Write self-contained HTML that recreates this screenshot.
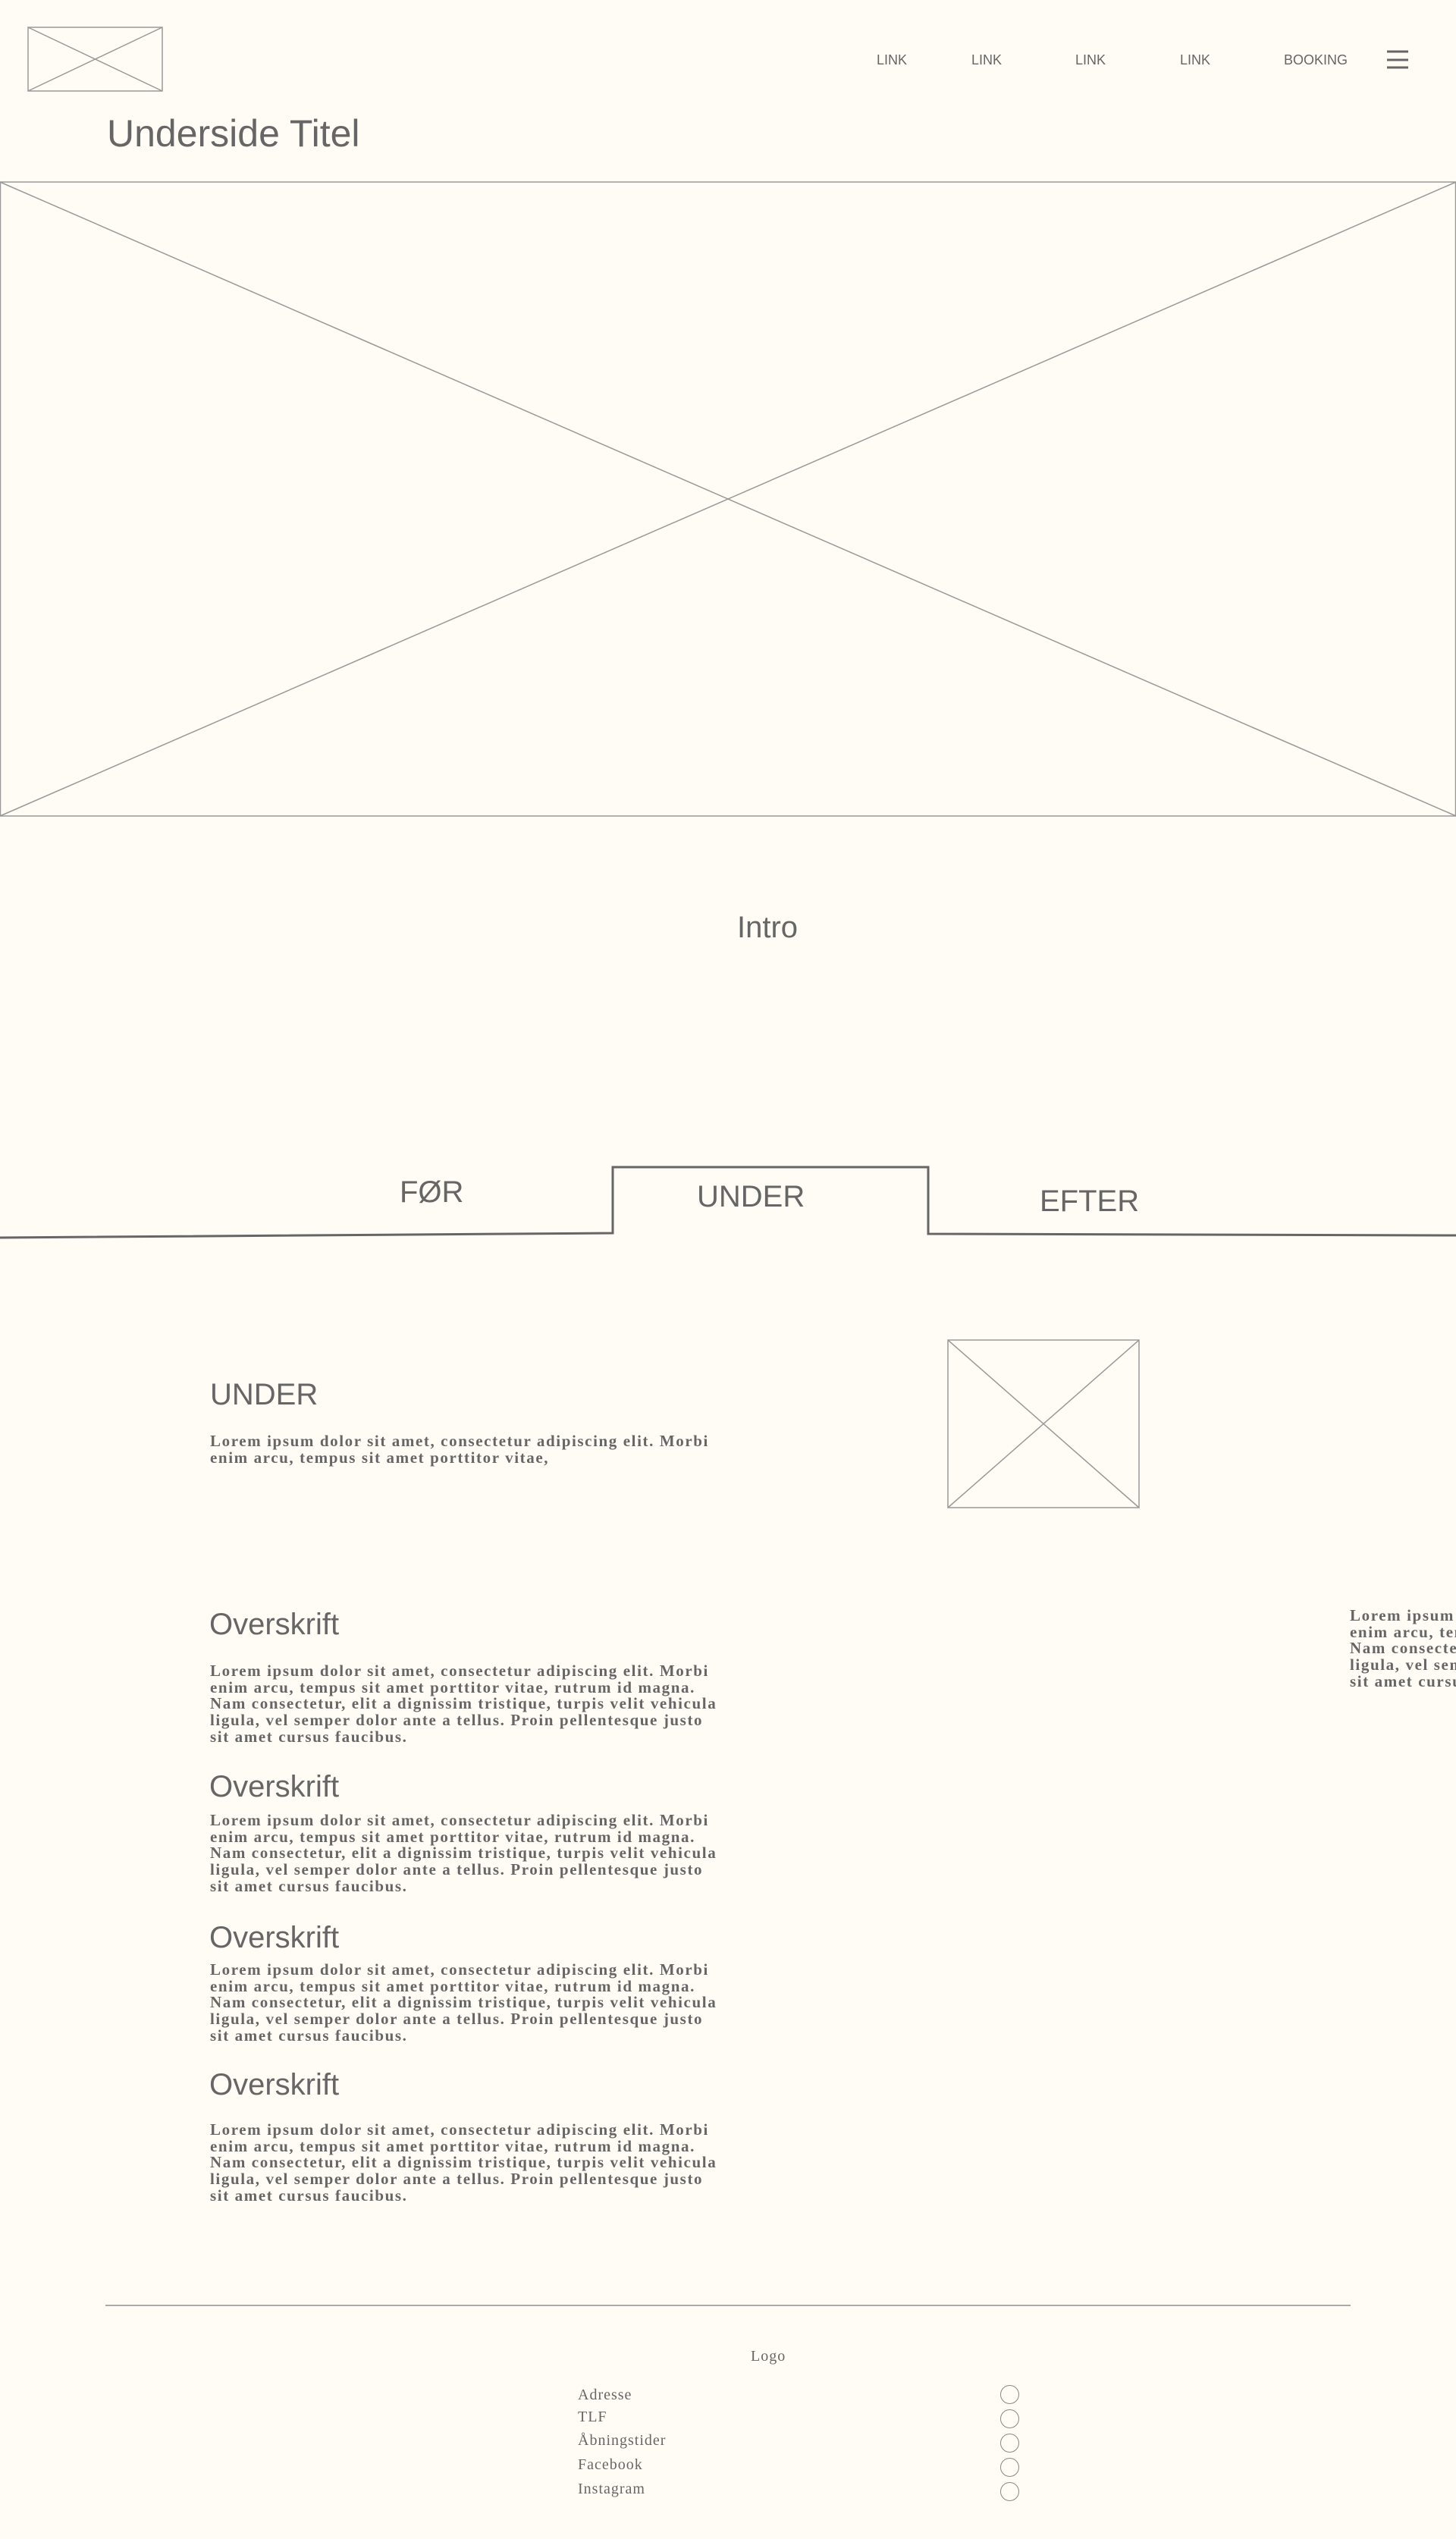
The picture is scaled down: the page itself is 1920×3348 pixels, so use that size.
<!DOCTYPE html>
<html><head><meta charset="utf-8"><style>
html,body{margin:0;padding:0;overflow:hidden}
body{width:1920px;height:3348px;background:#fffcf5;position:relative;overflow:hidden;color:#666;font-family:"Liberation Sans",sans-serif}
.a{position:absolute;white-space:nowrap}
.nav{font-size:18px;top:68px;line-height:22px;font-weight:300}
.h{font-size:40px;line-height:40px}
.p{font-family:"Liberation Serif",serif;font-weight:bold;font-size:21px;line-height:21.7px;letter-spacing:1.6px}
.f{font-family:"Liberation Serif",serif;font-size:20px;letter-spacing:1px;line-height:24px}
.c{position:absolute;left:1319px;width:23px;height:23px;border:1px solid #888;border-radius:50%}
</style></head><body>
<svg class="a" style="left:0;top:0" width="1920" height="3348">
<g fill="none" stroke="#999" stroke-width="1.5">
<rect x="37" y="36" width="177" height="84"/><line x1="37" y1="36" x2="214" y2="120"/><line x1="214" y1="36" x2="37" y2="120"/>
<rect x="0.5" y="240" width="1919" height="836"/><line x1="0" y1="240" x2="1920" y2="1076"/><line x1="1920" y1="240" x2="0" y2="1076"/>
<rect x="1250" y="1767" width="252" height="221"/><line x1="1250" y1="1767" x2="1502" y2="1988"/><line x1="1502" y1="1767" x2="1250" y2="1988"/>
<line x1="139" y1="3040" x2="1781" y2="3040" stroke="#aaa" stroke-width="2"/>
</g>
<g fill="none" stroke="#666" stroke-width="3">
<polyline points="0,1632 808,1626 808,1539 1224,1539 1224,1627 1920,1629"/>
</g>
<g stroke="#666" stroke-width="3"><line x1="1829" y1="68" x2="1857" y2="68"/><line x1="1829" y1="79" x2="1857" y2="79"/><line x1="1829" y1="89" x2="1857" y2="89"/></g>
</svg>
<div class="a nav" style="left:1156px">LINK</div>
<div class="a nav" style="left:1281px">LINK</div>
<div class="a nav" style="left:1418px">LINK</div>
<div class="a nav" style="left:1556px">LINK</div>
<div class="a nav" style="left:1693px">BOOKING</div>
<div class="a" style="left:141px;top:148px;font-size:50px;line-height:56px;font-weight:300">Underside Titel</div>
<div class="a" style="left:972px;top:1200px;font-size:40px;line-height:46px">Intro</div>
<div class="a h" style="left:527px;top:1552px">FØR</div>
<div class="a h" style="left:919px;top:1558px">UNDER</div>
<div class="a h" style="left:1371px;top:1564px">EFTER</div>
<div class="a h" style="left:277px;top:1819px">UNDER</div>
<div class="a p" style="left:277px;top:1890px">Lorem ipsum dolor sit amet, consectetur adipiscing elit. Morbi<br>enim arcu, tempus sit amet porttitor vitae,</div>
<div class="a h" style="left:276px;top:2122px">Overskrift</div>
<div class="a p" style="left:277px;top:2193px">Lorem ipsum dolor sit amet, consectetur adipiscing elit. Morbi<br>enim arcu, tempus sit amet porttitor vitae, rutrum id magna.<br>Nam consectetur, elit a dignissim tristique, turpis velit vehicula<br>ligula, vel semper dolor ante a tellus. Proin pellentesque justo<br>sit amet cursus faucibus.</div>
<div class="a p" style="left:1780px;top:2120px">Lorem ipsum dolor sit amet, consectetur adipiscing elit. Morbi<br>enim arcu, tempus sit amet porttitor vitae, rutrum id magna.<br>Nam consectetur, elit a dignissim tristique, turpis velit vehicula<br>ligula, vel semper dolor ante a tellus. Proin pellentesque justo<br>sit amet cursus faucibus.</div>
<div class="a h" style="left:276px;top:2336px">Overskrift</div>
<div class="a p" style="left:277px;top:2390px">Lorem ipsum dolor sit amet, consectetur adipiscing elit. Morbi<br>enim arcu, tempus sit amet porttitor vitae, rutrum id magna.<br>Nam consectetur, elit a dignissim tristique, turpis velit vehicula<br>ligula, vel semper dolor ante a tellus. Proin pellentesque justo<br>sit amet cursus faucibus.</div>
<div class="a h" style="left:276px;top:2535px">Overskrift</div>
<div class="a p" style="left:277px;top:2587px">Lorem ipsum dolor sit amet, consectetur adipiscing elit. Morbi<br>enim arcu, tempus sit amet porttitor vitae, rutrum id magna.<br>Nam consectetur, elit a dignissim tristique, turpis velit vehicula<br>ligula, vel semper dolor ante a tellus. Proin pellentesque justo<br>sit amet cursus faucibus.</div>
<div class="a h" style="left:276px;top:2729px">Overskrift</div>
<div class="a p" style="left:277px;top:2798px">Lorem ipsum dolor sit amet, consectetur adipiscing elit. Morbi<br>enim arcu, tempus sit amet porttitor vitae, rutrum id magna.<br>Nam consectetur, elit a dignissim tristique, turpis velit vehicula<br>ligula, vel semper dolor ante a tellus. Proin pellentesque justo<br>sit amet cursus faucibus.</div>
<div class="a f" style="left:990px;top:3095px">Logo</div>
<div class="a f" style="left:762px;top:3146px">Adresse</div>
<div class="a f" style="left:762px;top:3175px">TLF</div>
<div class="a f" style="left:762px;top:3206px">Åbningstider</div>
<div class="a f" style="left:762px;top:3238px">Facebook</div>
<div class="a f" style="left:762px;top:3270px">Instagram</div>
<div class="c" style="top:3145px"></div>
<div class="c" style="top:3177px"></div>
<div class="c" style="top:3209px"></div>
<div class="c" style="top:3241px"></div>
<div class="c" style="top:3273px"></div>
</body></html>
